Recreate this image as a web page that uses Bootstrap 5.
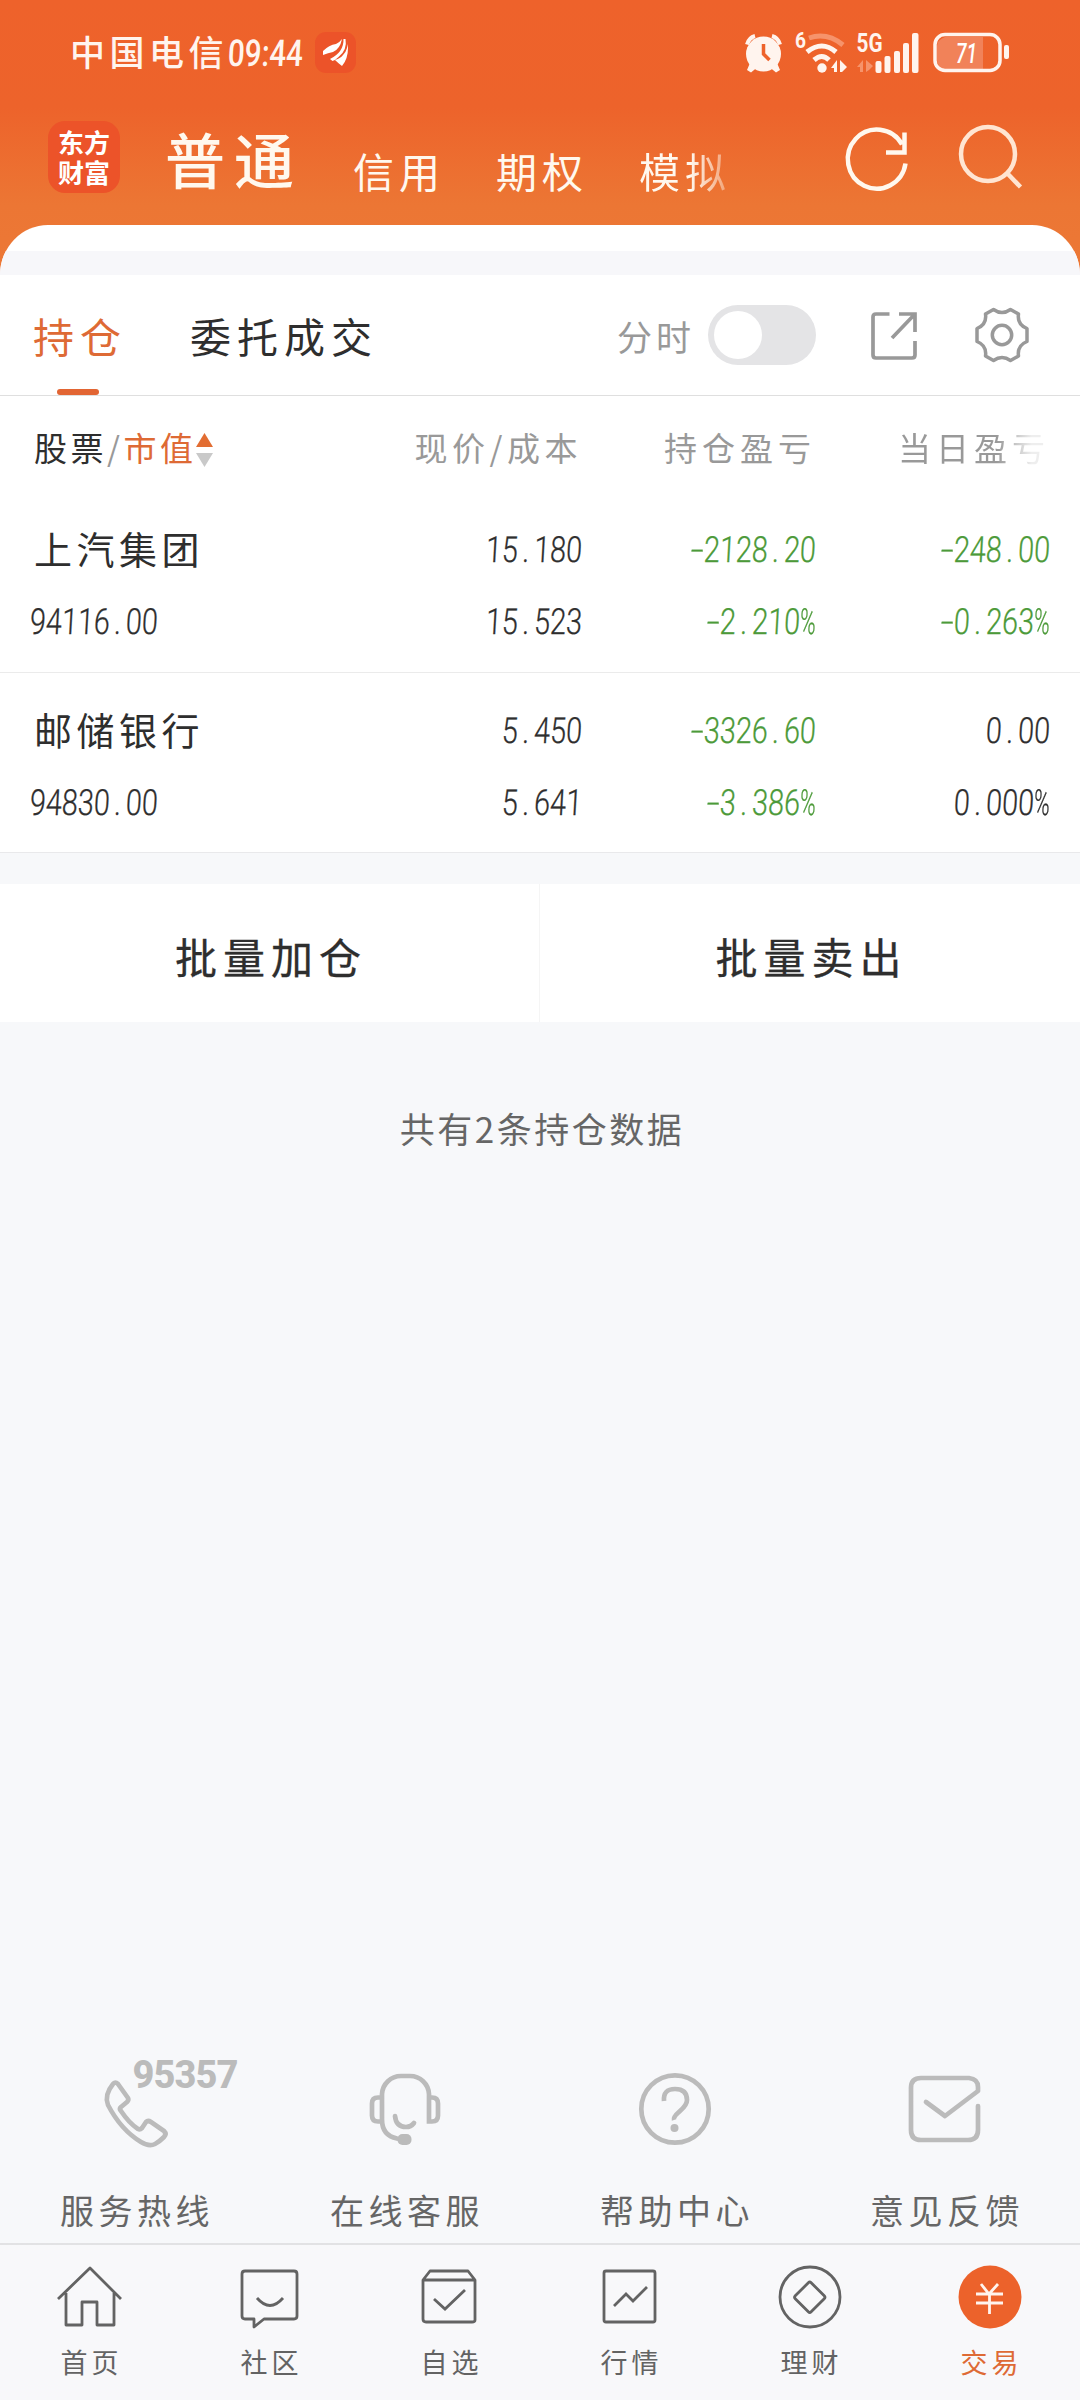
<!DOCTYPE html>
<html lang="zh-CN">
<head>
<meta charset="utf-8">
<meta name="viewport" content="width=device-width, initial-scale=1">
<title>持仓</title>
<link href="https://cdn.jsdelivr.net/npm/bootstrap@5.3.0/dist/css/bootstrap.min.css" rel="stylesheet">
<style>
body{background:#f7f8fa;font-family:"Noto Sans CJK SC",sans-serif;color:#2e2e2e;line-height:1}
.screen{width:1080px;height:2400px;overflow:hidden}
.top-area{background:linear-gradient(#ee622b 0,#ed632b 108px,#ec7634 205px,#ec7836 275px)}
.status{height:104px;padding:0 70px 0 70px;color:#fff4ee}
.carrier{font-size:35px;letter-spacing:4.5px;font-weight:500;white-space:nowrap;width:245px}
.carrier .clock{display:inline-block;font-family:Roboto,sans-serif;font-size:37px;letter-spacing:0;transform:scaleX(.8) skewX(-4deg);transform-origin:left}
.head{height:121px;color:#fff8ee}
.logo{width:72px;height:72px;border-radius:17px;background:#ec5329;font-weight:700;font-size:26px;line-height:30px;padding:6px 0;text-align:center;margin:17px 0 0 48px;white-space:nowrap;color:#fff}
.logo div{height:30px}
.acct{font-size:41px;letter-spacing:5px;white-space:nowrap;margin:46px 0 0 50px}
.acct~.acct~.acct{margin-left:51px}
.acct.acct-main{font-size:60px;letter-spacing:9px;font-weight:500;margin:24px 0 0 45px}
.fade-end{background:linear-gradient(90deg,#fff8ee 55%,rgba(255,248,238,.3) 100%);-webkit-background-clip:text;color:transparent}
.head-ic{margin:15px 57px 0 0}
.sheet{border-radius:48px 48px 0 0/50px 50px 0 0;overflow:hidden}
.strip{height:24px;margin-top:26px;background:#f7f7fa}
.tabs-row{height:121px;border-bottom:1px solid #dfdfdf;padding:0 50px 0 33px}
.tab-t{font-size:41px;letter-spacing:6px;white-space:nowrap;height:120px;line-height:120px;position:relative}
.tab-t.on{color:#de6a35;width:157px}
.tab-t.on::after{content:"";position:absolute;left:24px;bottom:0;width:42px;height:6px;border-radius:3px;background:#e26533}
.fs-label{font-size:35px;letter-spacing:4px;color:#999;margin-right:13px}
.slide{width:108px;height:60px;border-radius:30px;background:#e4e4e6;padding:6px}
.slide span{display:block;width:48px;height:48px;border-radius:50%;background:#fff}
.ic-share{margin-left:54px}.ic-gear{margin-left:56px}
.pos-grid{display:grid;grid-template-columns:300px 282px 234px 234px;padding-right:30px}
.pos-grid>*{text-align:right;white-space:nowrap}
.pos-grid>:first-child{text-align:left}
.col-heads{height:102px;line-height:102px;font-size:33px;letter-spacing:5px;color:#999}
.col-heads>:first-child{padding-left:34px;letter-spacing:3.5px}
.col-heads>:nth-child(2){letter-spacing:4.500px}
.sort-ic{margin-top:-5px}
.ink{color:#2e2e2e}
.orange{color:#de6a35}
.dim-end{background:linear-gradient(90deg,#999 65%,#eee 88%);-webkit-background-clip:text;color:transparent}
.stock{height:174px;padding-top:15px}
.stock-next{height:181px;padding-top:21px;border-top:1px solid #ebebeb;border-bottom:1px solid #e9e9eb}
.line-a{height:72px;line-height:72px}
.nm{font-size:38px;letter-spacing:4.5px;padding-left:34px;line-height:69px}
.num{display:inline-block;font-family:Roboto,sans-serif;font-weight:300;-webkit-text-stroke:.3px;font-size:36px;transform:translateY(1px) scaleX(.8) skewX(-4deg);transform-origin:right center}
.num.lft{transform-origin:left center;margin-left:30px}
.num i{display:inline-block;width:20.2px;text-align:center;font-style:normal}
.num u{display:inline-block;text-decoration:none;width:17px;transform:scaleX(1.6);text-align:center}
.num s{display:inline-block;text-decoration:none;width:20px;transform:scaleX(.75);transform-origin:left}
.green{color:#4c9a39}
.batch{margin-top:31px;height:138px;background:#fff}
.batch>div{width:50%;text-align:center;font-size:42px;letter-spacing:6px;font-weight:400;-webkit-text-stroke:.3px;line-height:143px;padding-left:3px}
.batch>div:first-child{border-right:1px solid #f5f5f5}
.total{margin-top:88px;font-size:35px;letter-spacing:2.5px;line-height:36px;color:#666;text-align:center;padding-left:4px}
.svc{height:195px;color:#666}
.svc>div{width:270px}
.svc .lbl{font-size:34px;letter-spacing:4.5px;line-height:36px;margin-top:34px;padding-left:4px}
.svc-ic{height:110px;width:270px;display:block}
.botnav{height:157px;border-top:2px solid #e2e2e4;background:#f8f8fa;color:#636363}
.botnav>div{width:180px}
.botnav .lbl{font-size:27px;letter-spacing:4px;line-height:28px;padding-left:3px}
.botnav .lbl.orange{color:#de6a35}
.botnav svg{display:block;width:180px;height:103px}
svg{flex:none;fill:none;overflow:visible}
</style>
</head>
<body>
<div class="screen d-flex flex-column">
 <div class="top-area">
  <div class="status d-flex align-items-center">
   <div class="carrier">中国电信<span class="clock">09:44</span></div>
   <svg width="41" height="41" viewBox="0 0 41 41"><rect width="41" height="41" rx="11" fill="#ec5329"/><path fill="#fff" d="M8 19q6-6 13-7 4-2 6-5-2 10-9 13-5 1-10 3zM15 27q14-7 13.500-20h2q2 11-7 18-3 3-6 4zM32 7q2 10-4 16-2 3-8 5 3 3 7 6 6-7 6-18z"/></svg>
   <svg class="ms-auto" width="265" height="41" viewBox="745 31 265 41">
    <path d="M747 43.500q2-7 8-8.500M780 43.500q-2-7-8-8.500" stroke="#fff4ee" stroke-width="4"/>
    <g fill="#fff4ee"><circle cx="763.500" cy="53" r="17.500"/><path d="M750 62l-3 7 4 2.500 6-5zM777 62l3 7-4 2.500-6-5z"/>
    <circle cx="822" cy="67" r="4.700"/><path d="M831 67l6-8v12h-3v-4zM840 71V59l7 7-5 5z"/><rect x="875.500" y="60" width="6" height="12" rx="2"/><rect x="884.500" y="55" width="6" height="17" rx="2"/><rect x="894" y="50" width="6" height="22" rx="2"/><rect x="903" y="42" width="6" height="30" rx="2"/><rect x="912" y="32" width="6.500" height="40" rx="2"/></g>
    <path d="M763.500 43v10l6 6" stroke="#ee622b" stroke-width="3.500"/>
    <path d="M807 51q15-12 29 0M814 59q8-7 15 0" stroke="#fff4ee" stroke-width="5"/><path d="M809 37q18-6 34 7" stroke="#f6936b" stroke-width="5"/>
    <path fill="#f6936b" d="M857 66l6-7v12h-3v-5zM866 71V59l7 6-4 4z"/>
    <g fill="#fff4ee" font-family="Roboto" font-weight="700"><text x="795" y="47" font-size="22" textLength="11" lengthAdjust="spacingAndGlyphs">6</text><text x="856.500" y="51" font-size="25" textLength="26" lengthAdjust="spacingAndGlyphs">5G</text></g>
    <path fill="#f18259" d="M945 36h38v33h-38q-8-3-8-10V45q0-6 8-9"/><rect x="935" y="33.500" width="65" height="36" rx="10" stroke="#fff4ee" stroke-width="3.500"/><rect x="1004" y="44" width="5" height="14" rx="2" fill="#fff4ee"/>
    <text x="956" y="62" font-family="Roboto" font-style="italic" font-weight="500" font-size="27" textLength="21" lengthAdjust="spacingAndGlyphs" fill="#fff">71</text>
   </svg>
  </div>
  <div class="head d-flex">
   <div class="logo"><div>东方</div><div>财富</div></div>
   <div class="acct acct-main">普通</div>
   <div class="acct">信用</div>
   <div class="acct">期权</div>
   <div class="acct fade-end">模拟</div>
   <svg class="head-ic ms-auto" width="180" height="80" viewBox="842 119 180 80" stroke-width="4.500"><path d="M904.500 164a29 29.500 0 1 1-3.500-19M903.500 133v20H885" transform="translate(0 -5) translate(0 4.500)" stroke="#fff8ee"/><g stroke="#ffe5d2"><circle cx="987" cy="154" r="27"/><path d="M1006 173l13.500 14"/></g></svg>
  </div>
  <div class="sheet bg-white">
   <div class="strip"></div>
   <div class="tabs-row d-flex align-items-center">
    <div class="tab-t on">持仓</div><div class="tab-t">委托成交</div>
    <div class="fs-label ms-auto">分时</div>
    <div class="slide"><span></span></div>
    <svg class="ic-share" width="48" height="48" viewBox="870 311 48 48" stroke="#999" stroke-width="3.700"><path d="M889.500 314H876q-3 0-3 3v38q0 3 3 3h36q3 0 3-3v-14M899 314h16v18M892 338l22-23"/></svg>
    <svg class="ic-gear" width="56" height="56" viewBox="-28 -28 56 56" stroke="#999" stroke-width="3.500"><circle r="9.700"/><path stroke-linejoin="round" d="M-8.500-25.500Q0-19.500 8.500-25.500L16.500-21Q15-10.500 25-6.500V6.500Q15 10.500 16.500 21L8.500 25.500Q0 19.500-8.500 25.500L-16.500 21Q-15 10.500-25 6.500V-6.500Q-15-10.500-16.500-21Z"/></svg>
   </div>
   <div class="pos-grid col-heads"><div><span class="ink">股票</span><span>/</span><span class="orange">市值</span><svg class="sort-ic" width="17" height="34" viewBox="0 0 17 34"><path d="M8.500 0L17 14H0z" fill="#e26d32"/><path d="M8.500 34L17 20H0z" fill="#c9c9c9"/></svg></div><div>现价/成本</div><div>持仓盈亏</div><div><span class="dim-end">当日盈亏</span></div></div>
   <div class="stock">
    <div class="pos-grid line-a"><div class="nm">上汽集团</div><div><span class="num">15<i>.</i>180</span></div><div class="green"><span class="num"><u>-</u>2128<i>.</i>20</span></div><div class="green"><span class="num"><u>-</u>248<i>.</i>00</span></div></div>
    <div class="pos-grid line-a"><div><span class="num lft">94116<i>.</i>00</span></div><div><span class="num">15<i>.</i>523</span></div><div class="green"><span class="num"><u>-</u>2<i>.</i>210<s>%</s></span></div><div class="green"><span class="num"><u>-</u>0<i>.</i>263<s>%</s></span></div></div>
   </div>
   <div class="stock-next">
    <div class="pos-grid line-a"><div class="nm">邮储银行</div><div><span class="num">5<i>.</i>450</span></div><div class="green"><span class="num"><u>-</u>3326<i>.</i>60</span></div><div><span class="num">0<i>.</i>00</span></div></div>
    <div class="pos-grid line-a"><div><span class="num lft">94830<i>.</i>00</span></div><div><span class="num">5<i>.</i>641</span></div><div class="green"><span class="num"><u>-</u>3<i>.</i>386<s>%</s></span></div><div><span class="num">0<i>.</i>000<s>%</s></span></div></div>
   </div>
  </div>
 </div>
 <div class="batch d-flex"><div>批量加仓</div><div>批量卖出</div></div>
 <div class="total">共有2条持仓数据</div>
 <div class="svc mt-auto d-flex text-center">
  <div><svg class="svc-ic" viewBox="0 2048 270 110"><path d="M113 2084q2-3 5 0l10 14q1 2-1 4l-6 5q-2 2 0 4 8 12 17 18 2 1 4-1l4-6q2-2 5 0l13 9q3 3 0 6-5 5-9 7-6 3-14-2-20-12-33-37-4-10 5-21z" stroke="#bbb" stroke-width="4.700" stroke-linejoin="round"/><text x="132.500" y="2088" font-family="Roboto" font-weight="800" font-size="38" textLength="106" fill="#bbb">95357</text></svg><div class="lbl">服务热线</div></div>
  <div><svg class="svc-ic" viewBox="271 2048 270 110" stroke="#bbb" stroke-width="4.700"><path stroke-linecap="round" d="M398 2138.500q-15-3-15-19V2094a19 19 0 0 1 19-18h9a19 19 0 0 1 19 18v27.500h3q6 0 6-6v-12q0-6-6-6h-3M383 2097.500h-4q-6 0-6 6v12q0 6 6 6h4M396 2116q1 11 11 11 5 0 8-4"/><rect x="398.500" y="2134" width="14" height="11" rx="5" fill="#bbb" stroke="none"/></svg><div class="lbl">在线客服</div></div>
  <div><svg class="svc-ic" viewBox="540 2048 270 110" stroke="#bbb" stroke-width="4.700"><circle cx="675" cy="2109" r="33.700"/><path d="M664 2101q-1-12 11-12t12 11q0 5-7 11t-6 9"/><circle cx="674.500" cy="2128" r="4" fill="#bbb" stroke="none"/></svg><div class="lbl">帮助中心</div></div>
  <div><svg class="svc-ic" viewBox="811 2048 270 110" stroke="#bbb" stroke-width="4.700"><path stroke-linecap="round" stroke-linejoin="round" d="M927 2102l19 14 33-25v-4q0-8-9-9h-48q-10 0-10 10v42q0 10 10 10h47q10 0 10-10v-24"/></svg><div class="lbl">意见反馈</div></div>
 </div>
 <div class="botnav d-flex text-center">
  <div><svg viewBox="0 2245 180 103" stroke="#636363" stroke-width="2.800"><path d="M58 2299l32-31 31 31M66 2293v32h16v-23h15v23h17v-32" stroke-linejoin="round"/></svg><div class="lbl">首页</div></div>
  <div><svg viewBox="180 2245 180 103" stroke="#636363" stroke-width="2.800"><path stroke-linejoin="round" d="M245 2271h49q3 0 3 3v42q0 3-3 3h-30l-10 8v-8h-9q-3 0-3-3v-42q0-3 3-3z"/><path d="M257 2298q13 15 26 0"/></svg><div class="lbl">社区</div></div>
  <div><svg viewBox="360 2245 180 103" stroke="#636363" stroke-width="2.800"><path stroke-linejoin="round" d="M423 2280l7-9h38l7 9v40q0 2-3 2h-46q-3 0-3-3zM423 2280h52"/><path d="M434 2299l11 10 20-19"/></svg><div class="lbl">自选</div></div>
  <div><svg viewBox="540 2245 180 103" stroke="#636363" stroke-width="2.800"><rect x="604" y="2271" width="51" height="51" rx="2"/><path d="M614 2306l12-12 7 7 14-14"/></svg><div class="lbl">行情</div></div>
  <div><svg viewBox="720 2245 180 103" stroke="#636363" stroke-width="2.800"><circle cx="810" cy="2297" r="30"/><rect x="798.500" y="2286" width="22.500" height="22.500" rx="2" transform="rotate(45 809.750 2297.250)"/></svg><div class="lbl">理财</div></div>
  <div><svg viewBox="900 2245 180 103"><circle cx="990" cy="2297" r="31.500" fill="#ec622b"/><path d="M981 2284l8 10 9-10M989.500 2294v20M976 2294h27M976 2303h27" stroke="#fff4ee" stroke-width="2.800"/></svg><div class="lbl orange">交易</div></div>
 </div>
</div>
<script src="https://cdn.jsdelivr.net/npm/bootstrap@5.3.0/dist/js/bootstrap.bundle.min.js"></script>
</body>
</html>
